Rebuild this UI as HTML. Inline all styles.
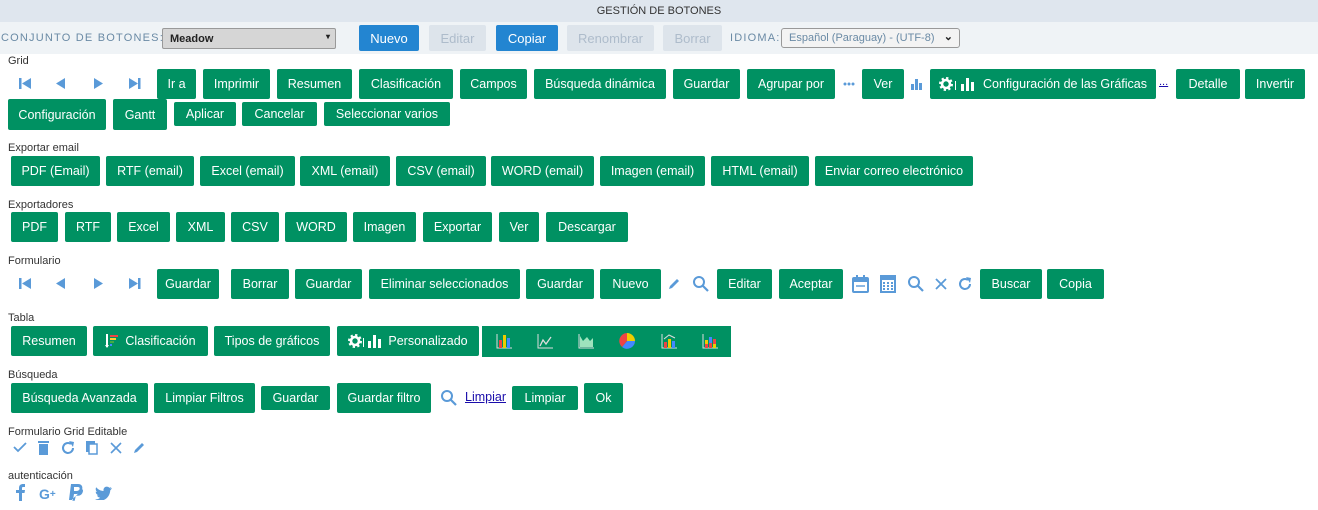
<!DOCTYPE html>
<html><head><meta charset="utf-8">
<style>
*{box-sizing:border-box;margin:0;padding:0}
body{width:1318px;height:510px;background:#fff;font-family:"Liberation Sans",sans-serif;position:relative;overflow:hidden}
.a{position:absolute}
.b{position:absolute;background:#009162;color:#fff;font-size:12.5px;display:flex;align-items:center;justify-content:center;white-space:nowrap;border-radius:2px}
.l{position:absolute;font-size:11px;color:#333}
.bl{position:absolute;background:#2385d1;color:#fff;font-size:13px;display:flex;align-items:center;justify-content:center;border-radius:2px}
.bd{position:absolute;background:#dde4eb;color:#aebccb;font-size:13px;display:flex;align-items:center;justify-content:center;border-radius:2px}
.i{position:absolute;color:#5a9ad8;font-size:14px}
svg{display:block}
</style></head><body>
<div class="a" style="left:0;top:0;width:1318px;height:22px;background:#dfe6ee;font-size:11px;color:#333;text-align:center;line-height:22px">GESTIÓN DE BOTONES</div>
<div class="a" style="left:0;top:22px;width:1318px;height:32px;background:#eff3f6"></div>
<div class="a" style="left:1px;top:32px;font-size:11px;letter-spacing:1.2px;color:#6a8aa5">CONJUNTO DE BOTONES:</div>
<div class="a" style="left:162px;top:28px;width:174px;height:21px;background:#d6d6d6;border:1px solid #999;border-radius:2px;font-size:11px;font-weight:bold;color:#222;padding:4px 0 0 7px">Meadow<span style="position:absolute;right:5px;top:3px;font-size:8px">▾</span></div>
<div class="bl" style="left:359px;top:25px;width:60px;height:26px">Nuevo</div>
<div class="bd" style="left:429px;top:25px;width:57px;height:26px">Editar</div>
<div class="bl" style="left:496px;top:25px;width:62px;height:26px">Copiar</div>
<div class="bd" style="left:567px;top:25px;width:87px;height:26px">Renombrar</div>
<div class="bd" style="left:663px;top:25px;width:59px;height:26px">Borrar</div>
<div class="a" style="left:730px;top:32px;font-size:11px;letter-spacing:1.2px;color:#6a8aa5">IDIOMA:</div>
<div class="a" style="left:781px;top:28px;width:179px;height:20px;background:#f3f3f3;border:1px solid #999;border-radius:3px;font-size:11px;color:#6a8aa5;padding:3px 0 0 7px">Español (Paraguay) - (UTF-8)<span style="position:absolute;right:6px;top:1px;color:#222;font-size:11px;font-weight:bold">⌄</span></div>

<div class="l" style="left:8px;top:55px">Grid</div>
<div class="i" style="left:19px;top:77px"><svg width="13" height="13"><rect x="0" y="1" width="2.5" height="11" fill="#5a9ad8"/><path d="M12 1V12L3 6.5Z" fill="#5a9ad8"/></svg></div>
<div class="i" style="left:54px;top:77px"><svg width="13" height="13"><path d="M11 1V12L2 6.5Z" fill="#5a9ad8"/></svg></div>
<div class="i" style="left:92px;top:77px"><svg width="13" height="13"><path d="M2 1V12L11 6.5Z" fill="#5a9ad8"/></svg></div>
<div class="i" style="left:128px;top:77px"><svg width="13" height="13"><path d="M1 1V12L10 6.5Z" fill="#5a9ad8"/><rect x="10" y="1" width="2.5" height="11" fill="#5a9ad8"/></svg></div>
<div class="b" style="left:157px;top:69px;width:39px;height:30px">Ir a</div>
<div class="b" style="left:203px;top:69px;width:67px;height:30px">Imprimir</div>
<div class="b" style="left:277px;top:69px;width:75px;height:30px">Resumen</div>
<div class="b" style="left:359px;top:69px;width:94px;height:30px">Clasificación</div>
<div class="b" style="left:460px;top:69px;width:67px;height:30px">Campos</div>
<div class="b" style="left:534px;top:69px;width:132px;height:30px">Búsqueda dinámica</div>
<div class="b" style="left:673px;top:69px;width:67px;height:30px">Guardar</div>
<div class="b" style="left:747px;top:69px;width:88px;height:30px">Agrupar por</div>
<div class="a" style="left:843px;top:82px"><svg width="12" height="4"><circle cx="2" cy="2" r="1.5" fill="#5a9ad8"/><circle cx="6" cy="2" r="1.5" fill="#5a9ad8"/><circle cx="10" cy="2" r="1.5" fill="#5a9ad8"/></svg></div>
<div class="b" style="left:862px;top:69px;width:42px;height:30px">Ver</div>
<div class="a" style="left:911px;top:79px"><svg width="12" height="11"><rect x="0" y="5" width="3" height="6" fill="#5a9ad8"/><rect x="4" y="0" width="3" height="11" fill="#5a9ad8"/><rect x="8" y="4" width="3" height="7" fill="#5a9ad8"/></svg></div>
<div class="b" style="left:930px;top:69px;width:226px;height:30px"><svg width="38" height="16" style="margin-right:6px"><circle cx="7" cy="8" r="4" fill="none" stroke="#fff" stroke-width="2.6"/><circle cx="7" cy="8" r="6" fill="none" stroke="#fff" stroke-width="2" stroke-dasharray="2.3 2.4"/><rect x="16" y="5" width="1" height="9" fill="#fff"/><rect x="22" y="8" width="3" height="7" fill="#fff"/><rect x="27" y="2" width="3" height="13" fill="#fff"/><rect x="32" y="6" width="3" height="9" fill="#fff"/></svg>Configuración de las Gráficas</div>
<div class="a" style="left:1159px;top:76px;font-size:11px;color:#1a0dab;text-decoration:underline">...</div>
<div class="b" style="left:1176px;top:69px;width:64px;height:30px">Detalle</div>
<div class="b" style="left:1245px;top:69px;width:60px;height:30px">Invertir</div>
<div class="b" style="left:8px;top:99px;width:98px;height:31px">Configuración</div>
<div class="b" style="left:113px;top:99px;width:54px;height:31px">Gantt</div>
<div class="b" style="left:174px;top:102px;width:62px;height:24px">Aplicar</div>
<div class="b" style="left:242px;top:102px;width:75px;height:24px">Cancelar</div>
<div class="b" style="left:324px;top:102px;width:126px;height:24px">Seleccionar varios</div>

<div class="l" style="left:8px;top:142px">Exportar email</div>
<div class="b" style="left:11px;top:156px;width:89px;height:30px">PDF (Email)</div>
<div class="b" style="left:106px;top:156px;width:88px;height:30px">RTF (email)</div>
<div class="b" style="left:200px;top:156px;width:95px;height:30px">Excel (email)</div>
<div class="b" style="left:300px;top:156px;width:90px;height:30px">XML (email)</div>
<div class="b" style="left:396px;top:156px;width:90px;height:30px">CSV (email)</div>
<div class="b" style="left:491px;top:156px;width:103px;height:30px">WORD (email)</div>
<div class="b" style="left:600px;top:156px;width:105px;height:30px">Imagen (email)</div>
<div class="b" style="left:711px;top:156px;width:98px;height:30px">HTML (email)</div>
<div class="b" style="left:815px;top:156px;width:158px;height:30px">Enviar correo electrónico</div>

<div class="l" style="left:8px;top:199px">Exportadores</div>
<div class="b" style="left:11px;top:212px;width:47px;height:30px">PDF</div>
<div class="b" style="left:65px;top:212px;width:46px;height:30px">RTF</div>
<div class="b" style="left:117px;top:212px;width:53px;height:30px">Excel</div>
<div class="b" style="left:176px;top:212px;width:49px;height:30px">XML</div>
<div class="b" style="left:231px;top:212px;width:48px;height:30px">CSV</div>
<div class="b" style="left:285px;top:212px;width:62px;height:30px">WORD</div>
<div class="b" style="left:353px;top:212px;width:63px;height:30px">Imagen</div>
<div class="b" style="left:423px;top:212px;width:69px;height:30px">Exportar</div>
<div class="b" style="left:499px;top:212px;width:40px;height:30px">Ver</div>
<div class="b" style="left:546px;top:212px;width:82px;height:30px">Descargar</div>

<div class="l" style="left:8px;top:255px">Formulario</div>
<div class="i" style="left:19px;top:277px"><svg width="13" height="13"><rect x="0" y="1" width="2.5" height="11" fill="#5a9ad8"/><path d="M12 1V12L3 6.5Z" fill="#5a9ad8"/></svg></div>
<div class="i" style="left:54px;top:277px"><svg width="13" height="13"><path d="M11 1V12L2 6.5Z" fill="#5a9ad8"/></svg></div>
<div class="i" style="left:92px;top:277px"><svg width="13" height="13"><path d="M2 1V12L11 6.5Z" fill="#5a9ad8"/></svg></div>
<div class="i" style="left:128px;top:277px"><svg width="13" height="13"><path d="M1 1V12L10 6.5Z" fill="#5a9ad8"/><rect x="10" y="1" width="2.5" height="11" fill="#5a9ad8"/></svg></div>
<div class="b" style="left:157px;top:269px;width:62px;height:30px">Guardar</div>
<div class="b" style="left:231px;top:269px;width:58px;height:30px">Borrar</div>
<div class="b" style="left:295px;top:269px;width:67px;height:30px">Guardar</div>
<div class="b" style="left:369px;top:269px;width:151px;height:30px">Eliminar seleccionados</div>
<div class="b" style="left:526px;top:269px;width:68px;height:30px">Guardar</div>
<div class="b" style="left:600px;top:269px;width:61px;height:30px">Nuevo</div>
<div class="a" style="left:668px;top:277px"><svg width="13" height="13"><path d="M1 12L2 9L9 2L11 4L4 11Z" fill="#5a9ad8"/></svg></div>
<div class="a" style="left:692px;top:275px"><svg width="17" height="17"><circle cx="7" cy="7" r="5" fill="none" stroke="#5a9ad8" stroke-width="2"/><path d="M11 11L16 16" stroke="#5a9ad8" stroke-width="2.2"/></svg></div>
<div class="b" style="left:717px;top:269px;width:55px;height:30px">Editar</div>
<div class="b" style="left:779px;top:269px;width:64px;height:30px">Aceptar</div>
<div class="a" style="left:852px;top:275px"><svg width="17" height="18"><rect x="1" y="3" width="15" height="14" rx="1" fill="none" stroke="#5a9ad8" stroke-width="2"/><rect x="1" y="3" width="15" height="4" fill="#5a9ad8"/><rect x="4" y="0" width="2" height="4" fill="#5a9ad8"/><rect x="11" y="0" width="2" height="4" fill="#5a9ad8"/><rect x="4" y="10" width="9" height="2" fill="#5a9ad8" opacity=".7"/></svg></div>
<div class="a" style="left:880px;top:275px"><svg width="16" height="18"><rect x="1" y="1" width="14" height="16" fill="none" stroke="#5a9ad8" stroke-width="2"/><rect x="1" y="1" width="14" height="4" fill="#5a9ad8"/><g fill="#5a9ad8"><rect x="3" y="7" width="2" height="2"/><rect x="7" y="7" width="2" height="2"/><rect x="11" y="7" width="2" height="2"/><rect x="3" y="10" width="2" height="2"/><rect x="7" y="10" width="2" height="2"/><rect x="11" y="10" width="2" height="2"/><rect x="3" y="13" width="2" height="2"/><rect x="7" y="13" width="2" height="2"/><rect x="11" y="13" width="2" height="2"/></g></svg></div>
<div class="a" style="left:907px;top:275px"><svg width="17" height="17"><circle cx="7" cy="7" r="5" fill="none" stroke="#5a9ad8" stroke-width="2"/><path d="M11 11L16 16" stroke="#5a9ad8" stroke-width="2.2"/></svg></div>
<div class="a" style="left:935px;top:278px"><svg width="12" height="12"><path d="M1 1L11 11M11 1L1 11" stroke="#5a9ad8" stroke-width="1.8"/></svg></div>
<div class="a" style="left:958px;top:277px"><svg width="14" height="14"><path d="M12 7A5 5 0 1 1 10 3" fill="none" stroke="#5a9ad8" stroke-width="2"/><path d="M8 0L13 1L12 6Z" fill="#5a9ad8"/></svg></div>
<div class="b" style="left:980px;top:269px;width:62px;height:30px">Buscar</div>
<div class="b" style="left:1047px;top:269px;width:57px;height:30px">Copia</div>

<div class="l" style="left:8px;top:312px">Tabla</div>
<div class="b" style="left:11px;top:326px;width:76px;height:30px">Resumen</div>
<div class="b" style="left:93px;top:326px;width:115px;height:30px"><svg width="14" height="16" style="margin-right:6px"><rect x="1" y="1" width="2" height="13" fill="#fff"/><path d="M0 12L2 15L4 12Z" fill="#fff"/><rect x="5" y="2" width="8" height="2" fill="#e44"/><rect x="5" y="5" width="6" height="2" fill="#fc3"/><rect x="5" y="8" width="4" height="2" fill="#4a4"/><rect x="5" y="11" width="2" height="2" fill="#48f"/></svg>Clasificación</div>
<div class="b" style="left:214px;top:326px;width:116px;height:30px">Tipos de gráficos</div>
<div class="b" style="left:337px;top:326px;width:142px;height:30px"><svg width="36" height="16" style="margin-right:4px"><circle cx="7" cy="8" r="4" fill="none" stroke="#fff" stroke-width="2.6"/><circle cx="7" cy="8" r="6" fill="none" stroke="#fff" stroke-width="2" stroke-dasharray="2.3 2.4"/><rect x="15" y="5" width="1" height="9" fill="#fff"/><rect x="20" y="8" width="3" height="7" fill="#fff"/><rect x="25" y="2" width="3" height="13" fill="#fff"/><rect x="30" y="6" width="3" height="9" fill="#fff"/></svg>Personalizado</div>
<div class="a" style="left:482px;top:326px;width:249px;height:31px;background:#009162"></div>
<div class="a" style="left:496px;top:333px"><svg width="16" height="16"><path d="M1 1V15H16" stroke="#ddd" fill="none"/><rect x="3" y="7" width="3" height="8" fill="#e44"/><rect x="7" y="2" width="3" height="13" fill="#ec0"/><rect x="11" y="5" width="3" height="10" fill="#48f"/></svg></div>
<div class="a" style="left:537px;top:333px"><svg width="16" height="16"><path d="M1 1V15H16" stroke="#ddd" fill="none"/><path d="M3 13L6 7L9 11L14 4" stroke="#ddd" fill="none" stroke-width="1.3"/></svg></div>
<div class="a" style="left:578px;top:333px"><svg width="16" height="16"><path d="M1 1V15H16" stroke="#ddd" fill="none"/><path d="M2 14V3L5 8L9 4L12 8L15 5V14Z" fill="#9de3bd"/></svg></div>
<div class="a" style="left:618px;top:332px"><svg width="18" height="18"><path d="M9 9L9 1A8 8 0 0 1 17 9Z" fill="#ec0"/><path d="M9 9L17 9A8 8 0 0 1 4 15Z" fill="#48f"/><path d="M9 9L4 15A8 8 0 0 1 9 1Z" fill="#e44"/></svg></div>
<div class="a" style="left:661px;top:333px"><svg width="16" height="16"><path d="M1 1V15H16" stroke="#ddd" fill="none"/><rect x="3" y="9" width="3" height="6" fill="#e44"/><rect x="7" y="6" width="3" height="9" fill="#ec0"/><rect x="11" y="8" width="3" height="7" fill="#48f"/><path d="M3 6L8 2L14 5" stroke="#ddd" fill="none"/></svg></div>
<div class="a" style="left:702px;top:333px"><svg width="16" height="16"><path d="M1 1V15H16" stroke="#ddd" fill="none"/><rect x="3" y="11" width="3" height="4" fill="#e44"/><rect x="3" y="7" width="3" height="4" fill="#ec0"/><rect x="7" y="10" width="3" height="5" fill="#e44"/><rect x="7" y="4" width="3" height="6" fill="#48f"/><rect x="11" y="11" width="3" height="4" fill="#ec0"/><rect x="11" y="6" width="3" height="5" fill="#e44"/></svg></div>

<div class="l" style="left:8px;top:369px">Búsqueda</div>
<div class="b" style="left:11px;top:383px;width:137px;height:30px">Búsqueda Avanzada</div>
<div class="b" style="left:154px;top:383px;width:101px;height:30px">Limpiar Filtros</div>
<div class="b" style="left:261px;top:386px;width:69px;height:24px">Guardar</div>
<div class="b" style="left:337px;top:383px;width:94px;height:30px">Guardar filtro</div>
<div class="a" style="left:440px;top:389px"><svg width="17" height="17"><circle cx="7" cy="7" r="5" fill="none" stroke="#5a9ad8" stroke-width="2"/><path d="M11 11L16 16" stroke="#5a9ad8" stroke-width="2.2"/></svg></div>
<div class="a" style="left:465px;top:390px;font-size:12.5px;color:#1a0dab;text-decoration:underline">Limpiar</div>
<div class="b" style="left:512px;top:386px;width:66px;height:24px">Limpiar</div>
<div class="b" style="left:584px;top:383px;width:39px;height:30px">Ok</div>

<div class="l" style="left:8px;top:426px">Formulario Grid Editable</div>
<div class="a" style="left:13px;top:441px"><svg width="14" height="12"><path d="M1 6L5 10L13 2" stroke="#5a9ad8" stroke-width="1.8" fill="none"/></svg></div>
<div class="a" style="left:38px;top:440px"><svg width="11" height="15"><rect x="0" y="1" width="11" height="2" fill="#5a9ad8"/><rect x="1" y="4" width="9" height="11" fill="#5a9ad8"/></svg></div>
<div class="a" style="left:61px;top:441px"><svg width="14" height="14"><path d="M12 7A5 5 0 1 1 10 3" fill="none" stroke="#5a9ad8" stroke-width="2"/><path d="M8 0L13 1L12 6Z" fill="#5a9ad8"/></svg></div>
<div class="a" style="left:86px;top:441px"><svg width="12" height="14"><rect x="0" y="0" width="9" height="11" fill="#5a9ad8"/><rect x="3" y="3" width="8" height="10" fill="#fff" stroke="#5a9ad8" stroke-width="1.5"/></svg></div>
<div class="a" style="left:110px;top:442px"><svg width="12" height="12"><path d="M1 1L11 11M11 1L1 11" stroke="#5a9ad8" stroke-width="1.6"/></svg></div>
<div class="a" style="left:133px;top:441px"><svg width="13" height="13"><path d="M1 12L2 9L9 2L11 4L4 11Z" fill="#5a9ad8"/></svg></div>

<div class="l" style="left:8px;top:470px">autenticación</div>
<div class="a" style="left:16px;top:484px"><svg width="10" height="17"><path d="M3 17V9H0V6H3V4C3 1 5 0 7 0H9V3H7C6 3 6 4 6 4V6H9L8.5 9H6V17Z" fill="#5a9ad8"/></svg></div>
<div class="a" style="left:39px;top:486px;font-size:14px;font-weight:bold;color:#5a9ad8">G<span style="font-size:10px;vertical-align:2px">+</span></div>
<div class="a" style="left:69px;top:484px"><svg width="15" height="17"><path d="M2 0H9C13 0 14 3 13 6C12 9 10 10 7 10H5L4 16H0Z" fill="#5a9ad8"/><path d="M5 3H9C11 3 11 5 10 6C9 7 8 7 7 7H5Z" fill="#fff"/><path d="M14 5C15 8 13 12 9 12H7L6 17H3L3.5 15" fill="#5a9ad8" stroke="#fff" stroke-width=".6"/></svg></div>
<div class="a" style="left:95px;top:486px"><svg width="17" height="14"><path d="M17 2C16 2.5 15.5 2.6 15 2.7C15.6 2.3 16 1.7 16.3 1C15.7 1.4 15 1.6 14.3 1.8C13 0.3 10.5 0.3 9.3 1.8C8.5 2.7 8.3 4 8.6 5C5.5 5 3 3.5 1.2 1.3C0.2 3 0.8 5 2.2 6C1.7 6 1.2 5.8 0.7 5.6C0.7 7.4 2 8.8 3.5 9.2C3 9.3 2.4 9.4 1.9 9.3C2.4 10.7 3.7 11.7 5.2 11.7C3.6 13 1.8 13.5 0 13.3C6 17 14.5 13.5 15.3 4.2C16 3.6 16.6 2.9 17 2Z" fill="#5a9ad8"/></svg></div>
</body></html>
